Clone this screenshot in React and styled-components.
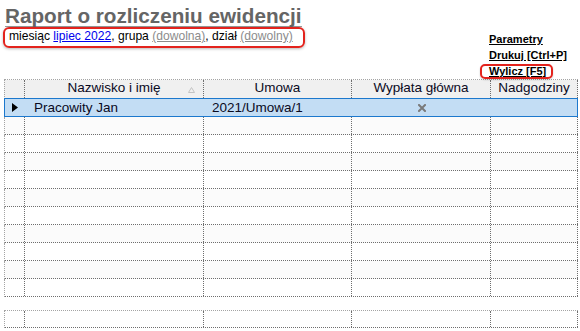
import React from "react";
import styled, { createGlobalStyle } from "styled-components";

const GlobalStyle = createGlobalStyle`
  html, body { margin: 0; padding: 0; background: #fff; }
  body {
    font-family: "Liberation Sans", Arial, sans-serif;
    width: 580px;
    height: 331px;
    overflow: hidden;
    color: #000;
  }
`;

const Page = styled.div`
  box-sizing: border-box;
  width: 580px;
  padding-left: 4px;
`;

const TopArea = styled.div`
  display: flex;
  height: 79px;
  position: relative;
`;

const TitleBlock = styled.div`
  display: flex;
  flex-direction: column;
  align-items: flex-start;
`;

const Title = styled.h1`
  margin: 0 0 0 1px;
  padding-top: 6px;
  font-size: 20.7px;
  line-height: 20px;
  font-weight: bold;
  color: #656565;
  border-bottom: 1px solid #9a9a9a;
  white-space: nowrap;
`;

const FilterBox = styled.div`
  margin: 0 0 0 -1px;
  padding: 0 10px 2px 4px;
  border: 2px solid #e3231d;
  border-radius: 6px;
  box-shadow: 0 1px 3px rgba(0, 0, 0, 0.28);
  font-size: 12.1px;
  line-height: 15px;
  white-space: nowrap;
`;

const FilterLink = styled.a`
  color: ${(p) => (p.$muted ? "#8c8c8c" : "#0000ee")};
  text-decoration: underline;
`;

const Links = styled.div`
  margin-left: auto;
  width: 91px;
  padding-top: 31px;
  display: flex;
  flex-direction: column;
  align-items: flex-start;
`;

const ActionLink = styled.a`
  position: relative;
  display: block;
  font-size: 11px;
  line-height: 16px;
  font-weight: bold;
  color: #000;
  text-decoration: underline;
  white-space: nowrap;
  &::after {
    content: "";
    display: ${(p) => (p.$highlight ? "block" : "none")};
    position: absolute;
    top: 1px;
    bottom: 0;
    left: -9px;
    right: -7px;
    border: 2px solid #e3231d;
    border-radius: 5px;
    box-shadow: 0 1px 2px rgba(0, 0, 0, 0.2);
    z-index: 1;
  }
`;

const Grid = styled.div`
  width: 574px;
  border-top: 1px dotted #a4a4a4;
  margin-top: ${(p) => p.$gap || 0}px;
`;

const Row = styled.div`
  display: grid;
  grid-template-columns: 20px 179px 148px 139px 1fr;
  box-sizing: border-box;
  height: ${(p) => p.$h}px;
  border-left: 1px dotted #a4a4a4;
  border-bottom: 1px dotted #6e6e6e;
  background: ${(p) => p.$bg || "#fff"};
`;

const SelectedRow = styled.div`
  display: grid;
  grid-template-columns: 20px 179px 148px 139px 1fr;
  box-sizing: border-box;
  height: 19px;
  margin-top: -1px;
  border: 1px solid #1c78cd;
  background: #c3ddf4;
  position: relative;
`;

const Cell = styled.div`
  box-sizing: border-box;
  border-right: ${(p) => (p.$noLine ? "none" : "1px dotted #6e6e6e")};
  position: relative;
  display: flex;
  align-items: ${(p) => (p.$center ? "center" : "flex-start")};
  justify-content: ${(p) => (p.$center ? "center" : "flex-start")};
  padding-left: ${(p) => p.$pl || 0}px;
  font-size: 13.5px;
  line-height: 17px;
  color: #0a0a1e;
  white-space: nowrap;
  overflow: hidden;
`;

const HeadCell = styled(Cell)`
  justify-content: center;
  line-height: 16px;
`;

const SortMark = styled.svg`
  position: absolute;
  right: 8px;
  top: 7px;
`;

const Glyph = styled.svg`
  display: block;
`;

const columns = ["", "Nazwisko i imię", "Umowa", "Wypłata główna", "Nadgodziny"];

const EmptyCells = () => columns.map((_, i) => <Cell key={i} />);

export default function App() {
  const rows = Array.from({ length: 10 }, (_, i) => i + 1);
  return (
    <>
      <GlobalStyle />
      <Page>
        <TopArea>
          <TitleBlock>
            <Title>Raport o rozliczeniu ewidencji</Title>
            <FilterBox>
              miesiąc <FilterLink>lipiec 2022</FilterLink>, grupa{" "}
              <FilterLink $muted>(dowolna)</FilterLink>, dział{" "}
              <FilterLink $muted>(dowolny)</FilterLink>
            </FilterBox>
          </TitleBlock>
          <Links>
            <ActionLink>Parametry</ActionLink>
            <ActionLink>Drukuj [Ctrl+P]</ActionLink>
            <ActionLink $highlight>Wylicz [F5]</ActionLink>
          </Links>
        </TopArea>

        <Grid>
          <Row $h={19} $bg="#f0f0f0">
            {columns.map((c, i) => (
              <HeadCell key={i}>
                {c}
                {i === 1 && (
                  <SortMark width="7" height="6" viewBox="0 0 7 6">
                    <path d="M3.5 0.5 L6.5 5.5 L0.5 5.5 Z" fill="none" stroke="#c4c4c4" strokeWidth="1" />
                  </SortMark>
                )}
              </HeadCell>
            ))}
          </Row>
          <SelectedRow>
            <Cell $noLine $center>
              <Glyph width="6" height="9" viewBox="0 0 6 9">
                <path d="M0 0 L6 4.5 L0 9 Z" fill="#000" />
              </Glyph>
            </Cell>
            <Cell $noLine $pl={9}>Pracowity Jan</Cell>
            <Cell $noLine $pl={8}>2021/Umowa/1</Cell>
            <Cell $noLine $center>
              <Glyph width="8" height="8" viewBox="0 0 8 8">
                <path d="M1 1 L7 7 M7 1 L1 7" stroke="#7a7a7a" strokeWidth="2" strokeLinecap="square" />
              </Glyph>
            </Cell>
            <Cell $noLine />
          </SelectedRow>
          {rows.map((r) => (
            <Row key={r} $h={18} $bg={r % 2 === 1 ? "#fbfbfb" : "#fff"}>
              <EmptyCells />
            </Row>
          ))}
        </Grid>

        <Grid $gap={13}>
          <Row $h={17}>
            <EmptyCells />
          </Row>
        </Grid>
      </Page>
    </>
  );
}
